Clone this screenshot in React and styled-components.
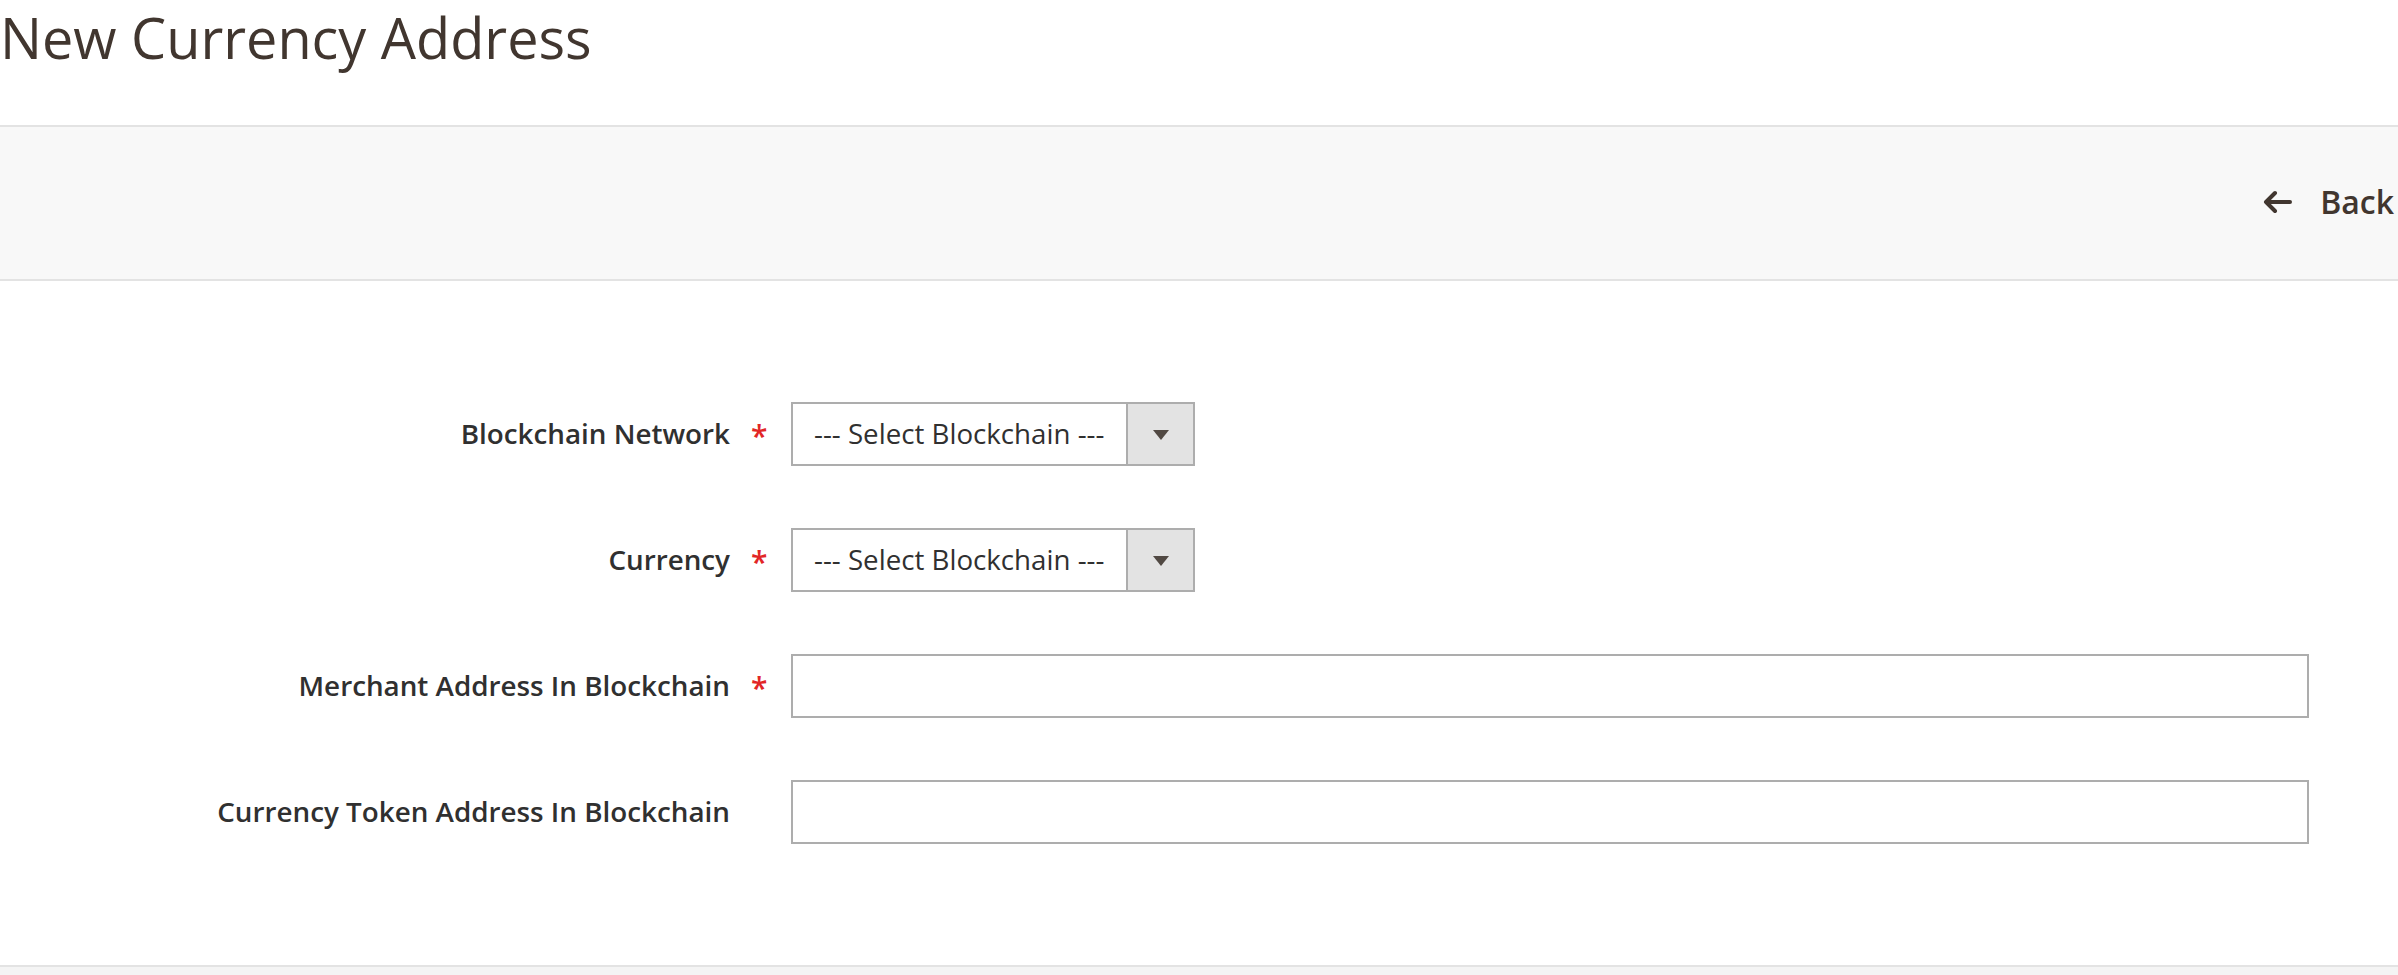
import React from "react";
import styled, { createGlobalStyle } from "styled-components";

const GlobalStyle = createGlobalStyle`
  html, body {
    margin: 0;
    padding: 0;
    background: #ffffff;
  }
  body {
    font-family: "Open Sans", "Liberation Sans", sans-serif;
    color: #303030;
  }
`;

const Page = styled.div`
  width: 2398px;
  height: 975px;
  display: flex;
  flex-direction: column;
  overflow: hidden;
`;

const Header = styled.header`
  height: 125px;
  box-sizing: border-box;
`;

const Title = styled.h1`
  margin: 0;
  font-size: 55.8px;
  line-height: 75px;
  font-weight: 400;
  color: #41362f;
`;

const Toolbar = styled.div`
  height: 156px;
  box-sizing: border-box;
  background: #f8f8f8;
  border-top: 2px solid #e3e3e3;
  border-bottom: 2px solid #e3e3e3;
  display: flex;
  align-items: center;
  justify-content: flex-end;
`;

const BackButton = styled.button`
  display: flex;
  align-items: center;
  gap: 28px;
  background: none;
  border: none;
  padding: 0;
  margin-right: 4px;
  margin-top: -3px;
  font-family: "Open Sans", "Liberation Sans", sans-serif;
  font-size: 32px;
  font-weight: 600;
  color: #41362f;
  cursor: pointer;
`;

const Form = styled.form`
  flex: 1;
  display: flex;
  flex-direction: column;
  gap: 62px;
  padding-top: 121px;
  box-sizing: border-box;
  border-bottom: 2px solid #e3e3e3;
`;

const Row = styled.div`
  display: flex;
  align-items: center;
  height: 64px;
`;

const Label = styled.label`
  width: 730px;
  text-align: right;
  font-size: 27.8px;
  font-weight: 600;
  color: #303030;
  white-space: nowrap;
  margin-top: -2px;
`;

const Required = styled.span`
  width: 61px;
  padding-left: 21px;
  box-sizing: border-box;
  font-size: 30px;
  font-weight: 600;
  color: #e22626;
  line-height: 1;
  margin-top: 4px;
  visibility: ${({ $show }) => ($show ? "visible" : "hidden")};
`;

const Select = styled.div`
  width: 404px;
  height: 64px;
  box-sizing: border-box;
  border: 2px solid #adadad;
  background: #ffffff;
  display: flex;
`;

const SelectValue = styled.div`
  flex: 1;
  display: flex;
  align-items: center;
  padding-left: 21px;
  font-size: 27.7px;
  font-weight: 400;
  color: #303030;
  white-space: nowrap;
  margin-top: -2px;
`;

const SelectToggle = styled.div`
  width: 65px;
  border-left: 2px solid #adadad;
  background: #e3e3e3;
  display: flex;
  align-items: center;
  justify-content: center;
`;

const Caret = styled.span`
  width: 0;
  height: 0;
  border-left: 8px solid transparent;
  border-right: 8px solid transparent;
  border-top: 10px solid #514943;
  margin-top: 2px;
`;

const TextInput = styled.input`
  width: 1518px;
  height: 64px;
  box-sizing: border-box;
  border: 2px solid #adadad;
  background: #ffffff;
  padding: 0 18px;
  font-family: inherit;
  font-size: 28px;
  outline: none;
`;

const Footer = styled.div`
  height: 8px;
  background: #f4f4f4;
`;

const BackArrow = () => (
  <svg width="30" height="24" viewBox="0 0 30 24" fill="none">
    <path
      d="M28 12H4M13 3L4 12L13 21"
      stroke="#41362f"
      strokeWidth="4"
      strokeLinecap="round"
      strokeLinejoin="round"
    />
  </svg>
);

const fields = [
  { label: "Blockchain Network", required: true, type: "select" },
  { label: "Currency", required: true, type: "select" },
  { label: "Merchant Address In Blockchain", required: true, type: "text" },
  { label: "Currency Token Address In Blockchain", required: false, type: "text" },
];

const App = () => {
  return (
    <Page>
      <GlobalStyle />
      <Header>
        <Title>New Currency Address</Title>
      </Header>
      <Toolbar>
        <BackButton type="button">
          <BackArrow />
          Back
        </BackButton>
      </Toolbar>
      <Form>
        {fields.map((f) => (
          <Row key={f.label}>
            <Label>{f.label}</Label>
            <Required $show={f.required}>*</Required>
            {f.type === "select" ? (
              <Select>
                <SelectValue>--- Select Blockchain ---</SelectValue>
                <SelectToggle>
                  <Caret />
                </SelectToggle>
              </Select>
            ) : (
              <TextInput type="text" />
            )}
          </Row>
        ))}
      </Form>
      <Footer />
    </Page>
  );
};

export default App;
